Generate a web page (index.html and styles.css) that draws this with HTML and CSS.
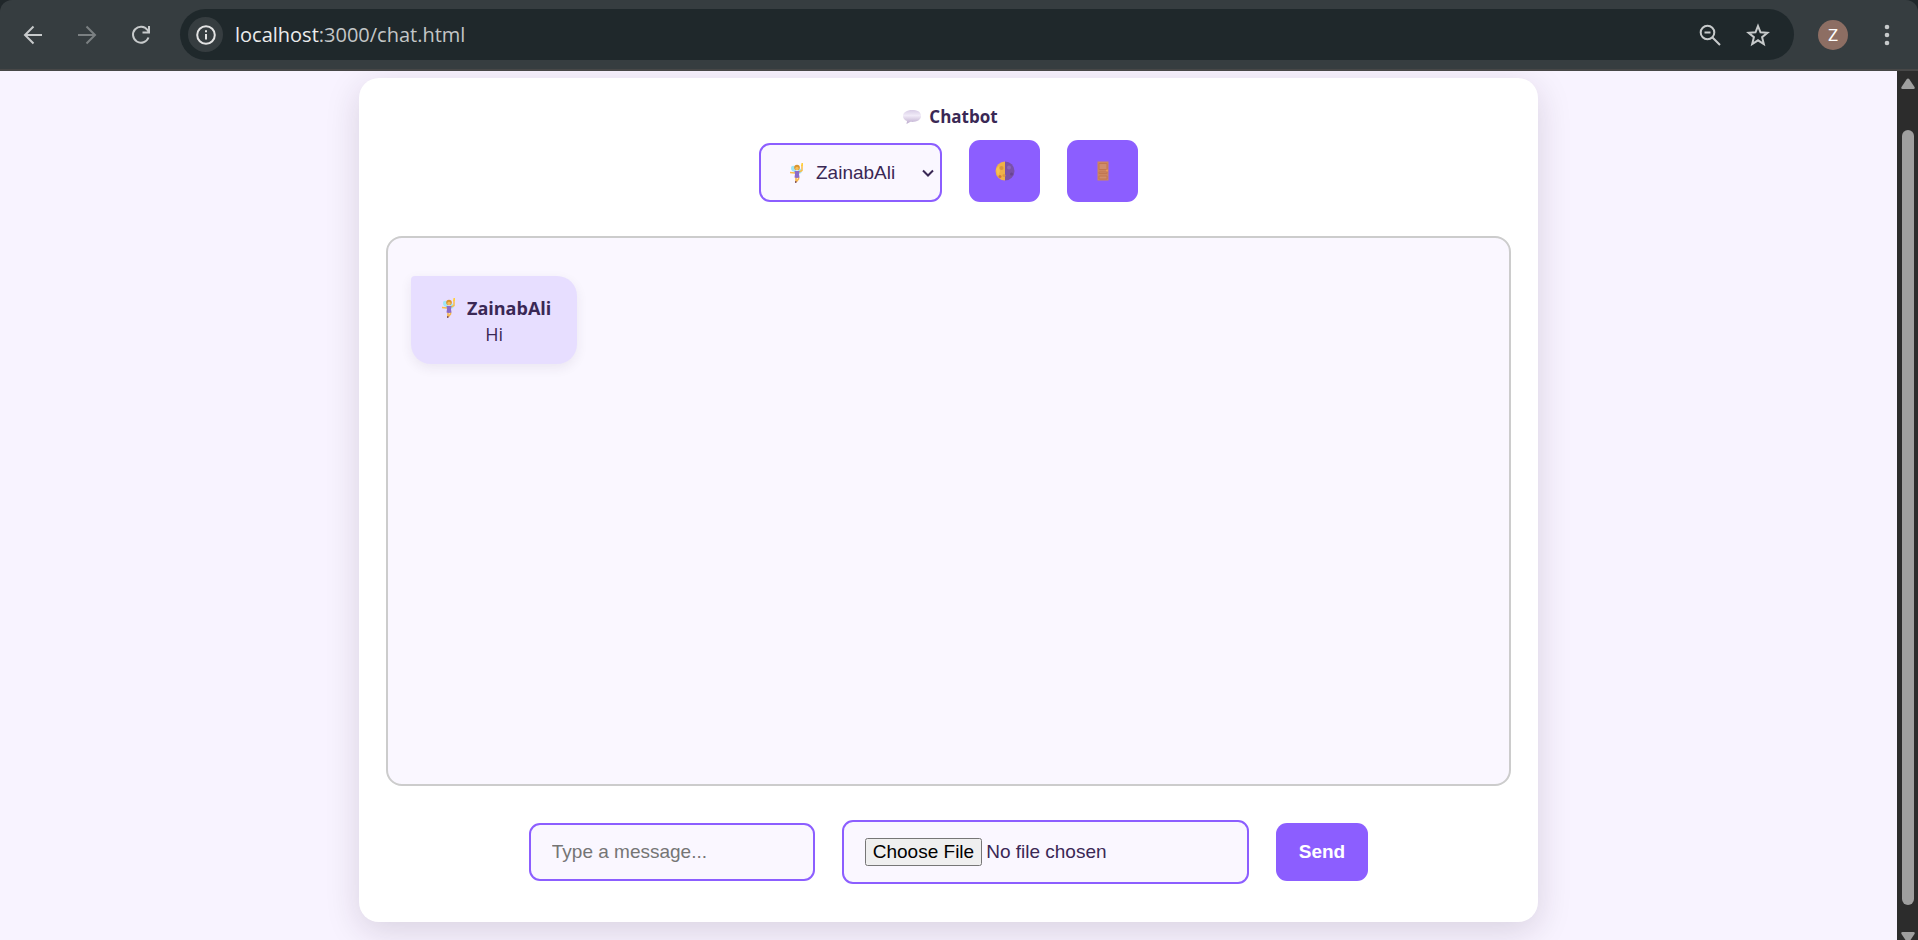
FILE: index.html
```html
<!DOCTYPE html>
<html lang="en">
<head>
<meta charset="utf-8">
<meta name="viewport" content="width=device-width, initial-scale=1">
<title>Chatbot</title>
<link rel="stylesheet" href="styles.css">
</head>
<body>
<svg class="defs" aria-hidden="true">
  <symbol id="fairy" viewBox="0 0 14 20">
    <path d="M6 5C5 2 1 2 1 5s2 4 5 4zM8 6c2-1 4 0 4 2s-2 3-4 3z" fill="#9fe6f6"/>
    <path d="M0 9.500l5 .5M9 9l3-1.500V2" stroke="#f9bd49" stroke-width="1.500" fill="none"/>
    <path d="M6 14v5M8.500 14v2l-2 2.500" stroke="#f6b64a" stroke-width="1.600" fill="none"/>
    <path d="M4.500 8h5l-.5 3 .5 3.500c-2 .6-3.500.6-5 0L5 11z" fill="#8a6cc8"/>
    <circle cx="7" cy="4.500" r="2.800" fill="#d9942f"/>
    <circle cx="7" cy="5.500" r="1.700" fill="#f8bd58"/>
    <path d="M11.500 0H13v3h-2zM10 15.500l-2 2" fill="#ffcf3d"/>
    <path d="M5 18h1.500v2H5z" fill="#875b61"/>
  </symbol>
</svg>
<header class="toolbar">
  <nav class="nav" aria-label="Navigation">
    <button class="tool" aria-label="Back"><svg width="20" height="20" viewBox="0 0 20 20"><path d="M19 10H2M10.500 1.500L2 10l8.500 8.500"/></svg></button>
    <button class="tool tool-off" aria-label="Forward" disabled><svg width="20" height="20" viewBox="0 0 20 20"><path d="M1 10h17M9.500 1.500L18 10l-8.500 8.500"/></svg></button>
    <button class="tool" aria-label="Reload"><svg width="20" height="20" viewBox="0 0 20 20"><path d="M17.500 12.500A8 8 0 1 1 16.500 5L18 7M18 1v6.500h-6.500"/></svg></button>
  </nav>
  <div class="address">
    <button class="site-info" aria-label="Site information"><svg width="22" height="22" viewBox="0 0 22 22"><circle cx="11" cy="11" r="8.800"/><path d="M11 10v5.500M11 6.300v2"/></svg></button>
    <div class="url" role="textbox" aria-label="Address"><span class="host">localhost</span>:3000/chat.html</div>
    <button class="tool" aria-label="Zoom"><svg width="24" height="24" viewBox="0 0 24 24"><circle cx="9.500" cy="9.500" r="6.800"/><path d="M14.500 14.500l7.500 7.500M6.500 9.500h6"/></svg></button>
    <button class="tool" aria-label="Bookmark"><svg width="24" height="24" viewBox="0 0 24 24"><path d="M12 3l2.500 6.300 6.900.5-5.300 4.400 1.700 6.800-5.800-3.700L6.200 21l1.700-6.800-5.300-4.400 6.900-.5z"/></svg></button>
  </div>
  <button class="avatar" aria-label="Profile">Z</button>
  <button class="tool dots" aria-label="Menu"><svg width="20" height="24" viewBox="0 0 20 24"><circle cx="10" cy="4" r="2.300"/><circle cx="10" cy="12" r="2.300"/><circle cx="10" cy="20" r="2.300"/></svg></button>
</header>
<div class="viewport">
  <main class="page">
    <section class="card">
      <h1 class="title"><svg width="22" height="14" viewBox="-4 0 22 14"><defs><linearGradient id="bubble" x2="0" y2="1"><stop stop-color="#d8cde6"/><stop offset=".4" stop-color="#f1ebf8"/><stop offset="1" stop-color="#bba9cc"/></linearGradient></defs><path d="M9 0C4 0 0 2.500 0 6c0 2.500 1.500 4 4 5L3.500 14l4-2.200C13 12.300 18 10.500 18 6S14 0 9 0z" fill="url(#bubble)"/></svg>Chatbot</h1>
      <div class="controls">
        <div class="picker">
          <svg class="picker-icon" width="14" height="20"><use href="#fairy"/></svg>
          <select class="field user" aria-label="User"><option>ZainabAli</option></select>
          <svg class="picker-arrow" width="12" height="8" viewBox="0 0 12 8"><path d="M1 1.500l5 5 5-5"/></svg>
        </div>
        <button class="btn btn-icon" aria-label="Toggle theme"><svg width="20" height="20" viewBox="0 0 20 20"><path d="M10 .5a9.500 9.500 0 0 0 0 19z" fill="#efb147"/><path d="M10 .5a9.500 9.500 0 0 1 0 19z" fill="#7951a9"/><path d="M1 8l3-3 1 5-2 5z" fill="#f7c34f"/><circle cx="6.500" cy="7" r="2" fill="#d9963f"/><circle cx="5" cy="15.500" r="1.500" fill="#cf7640"/><circle cx="9" cy="14.500" r="1.500" fill="#df983f"/><circle cx="14" cy="6.500" r="2" fill="#8c65bb"/><circle cx="16.500" cy="13" r="1.500" fill="#684493"/></svg></button>
        <button class="btn btn-icon" aria-label="Log out"><svg width="20" height="20" viewBox="0 0 20 20"><path d="M4.500 .5h11v19h-11z" fill="#cd8660"/><path d="M6 2.500h8v6H6zM6 11h8v1.500H6zM6 15h8v3H6z" fill="#d08d6b" stroke="#c27650"/><circle cx="14" cy="9.500" r="1" fill="#ef9b54"/></svg></button>
      </div>
      <div class="messages">
        <article class="message">
          <strong class="author"><svg width="24" height="20" viewBox="-5 0 24 20"><use href="#fairy" width="14" height="20"/></svg>ZainabAli</strong>
          <span class="message-text">Hi</span>
        </article>
      </div>
      <form class="composer">
        <input class="field text" type="text" placeholder="Type a message..." aria-label="Message">
        <input class="field file" type="file" aria-label="Attachment">
        <button class="btn send" type="button">Send</button>
      </form>
    </section>
  </main>
  <div class="scrollbar" aria-hidden="true">
    <svg width="14" height="11" viewBox="0 0 14 11"><path d="M5.500 1.500q1.500-2 3 0l5 7.500q.8 2-1 2h-11q-1.800 0-1-2z"/></svg>
    <div class="thumb"></div>
    <svg width="14" height="8" viewBox="0 0 14 8"><path d="M5.500 9.500q1.500 2 3 0l5-7.500q.8-2-1-2h-11q-1.800 0-1 2z"/></svg>
  </div>
</div>
</body>
</html>
```
FILE: styles.css
```css
* { box-sizing: border-box; }

body {
  margin: 0;
  height: 100vh;
  display: flex;
  flex-direction: column;
  overflow: hidden;
  background: #20272a;
  color: #3a2855;
  font-family: "Open Sans", "Noto Sans", sans-serif;
  font-size: 18px;
  line-height: 26px;
}

button { border: 0; padding: 0; font: inherit; }
svg { display: block; flex: none; }
.defs { position: absolute; width: 0; height: 0; }

.toolbar {
  flex: none;
  height: 71px;
  display: flex;
  align-items: center;
  padding: 0 13px 0 15px;
  background: #363d40;
  border-bottom: 2px solid #474747;
  border-radius: 12px 12px 0 0;
}
.nav { display: flex; gap: 18px; margin-right: 21px; }
.tool {
  width: 36px;
  height: 36px;
  display: grid;
  place-items: center;
  background: none;
}
.tool svg, .site-info svg {
  fill: none;
  stroke: #c7cacb;
  stroke-width: 2;
}
.tool-off svg { stroke: #7b8082; }
.tool.dots svg { fill: #c7cacb; stroke: none; }
.address {
  flex: 1;
  height: 51px;
  display: flex;
  align-items: center;
  gap: 12px;
  padding: 0 18px 0 8px;
  border-radius: 26px;
  background: #1f282b;
}
.site-info {
  width: 35px;
  height: 35px;
  display: grid;
  place-items: center;
  border-radius: 50%;
  background: #363d40;
}
.site-info svg { stroke: #e3e3e3; }
.url { flex: 1; font-size: 20px; color: #c3c6c7; }
.host { color: #ececec; }
.avatar {
  width: 30px;
  height: 30px;
  margin: 0 21px 0 24px;
  border-radius: 50%;
  background: #8d6e63;
  color: #fff;
  font-family: Roboto, sans-serif;
  font-size: 17px;
}

.viewport { flex: 1; min-height: 0; display: flex; }
.page {
  flex: 1;
  display: flex;
  justify-content: center;
  padding: 7px 24px 18px;
  overflow: hidden;
  background: #f8f3ff;
}
.card {
  width: 100%;
  max-width: 1179px;
  display: flex;
  flex-direction: column;
  padding: 26px 27px 38px;
  border-radius: 20px;
  background: #fff;
  box-shadow: 0 9px 34px rgba(40, 20, 50, 0.15);
}
.title {
  display: flex;
  justify-content: center;
  align-items: center;
  gap: 8px;
  margin: 0 0 10px;
  font-size: 17px;
}
.controls {
  display: flex;
  justify-content: center;
  align-items: flex-end;
  gap: 27px;
  margin-bottom: 34px;
}
.field {
  border: 2px solid #8c5eff;
  border-radius: 11px;
  background: #faf7ff;
  color: #3a2855;
  font-family: "Liberation Sans", Arial, sans-serif;
  font-size: 19px;
}
.picker { position: relative; }
.picker-icon { position: absolute; left: 31px; top: 20px; }
.picker-arrow {
  position: absolute;
  right: 8px;
  top: 26px;
  fill: none;
  stroke: #3a2855;
  stroke-width: 2;
}
.user {
  display: block;
  appearance: none;
  width: 183px;
  height: 59px;
  padding: 0 24px 0 55px;
}
.btn {
  border-radius: 11px;
  background: #8c5eff;
  color: #fff;
  font-family: "Liberation Sans", Arial, sans-serif;
  font-size: 19px;
  font-weight: 700;
}
.btn-icon {
  width: 71px;
  height: 62px;
  display: grid;
  place-items: center;
}

.messages {
  flex: 1;
  display: flex;
  flex-direction: column;
  align-items: flex-start;
  padding: 38px 23px;
  border: 2px solid #ccc;
  border-radius: 16px;
  background: #faf7ff;
}
.message {
  display: flex;
  flex-direction: column;
  align-items: center;
  padding: 19px 26px 17px;
  border-radius: 4px 20px 20px 20px;
  background: #e7deff;
  box-shadow: 0 4px 12px rgba(53, 36, 79, 0.08);
}
.author { display: flex; align-items: center; gap: 6px; }

.composer {
  display: flex;
  justify-content: center;
  align-items: center;
  gap: 27px;
  margin-top: 34px;
}
.text { width: 286px; height: 58px; padding: 0 21px; }
.text::placeholder { color: #757575; }
.file { width: 407px; height: 64px; padding: 16px 21px; }
.send { height: 58px; padding: 0 23px; }

.scrollbar {
  width: 21px;
  display: flex;
  flex-direction: column;
  align-items: center;
  padding-top: 7px;
  background: #2c2c2c;
}
.scrollbar svg { fill: #9f9f9f; }
.thumb {
  flex: 1;
  width: 12px;
  margin: 41px 0 27px;
  border-radius: 6px;
  background: #9f9f9f;
}
```
